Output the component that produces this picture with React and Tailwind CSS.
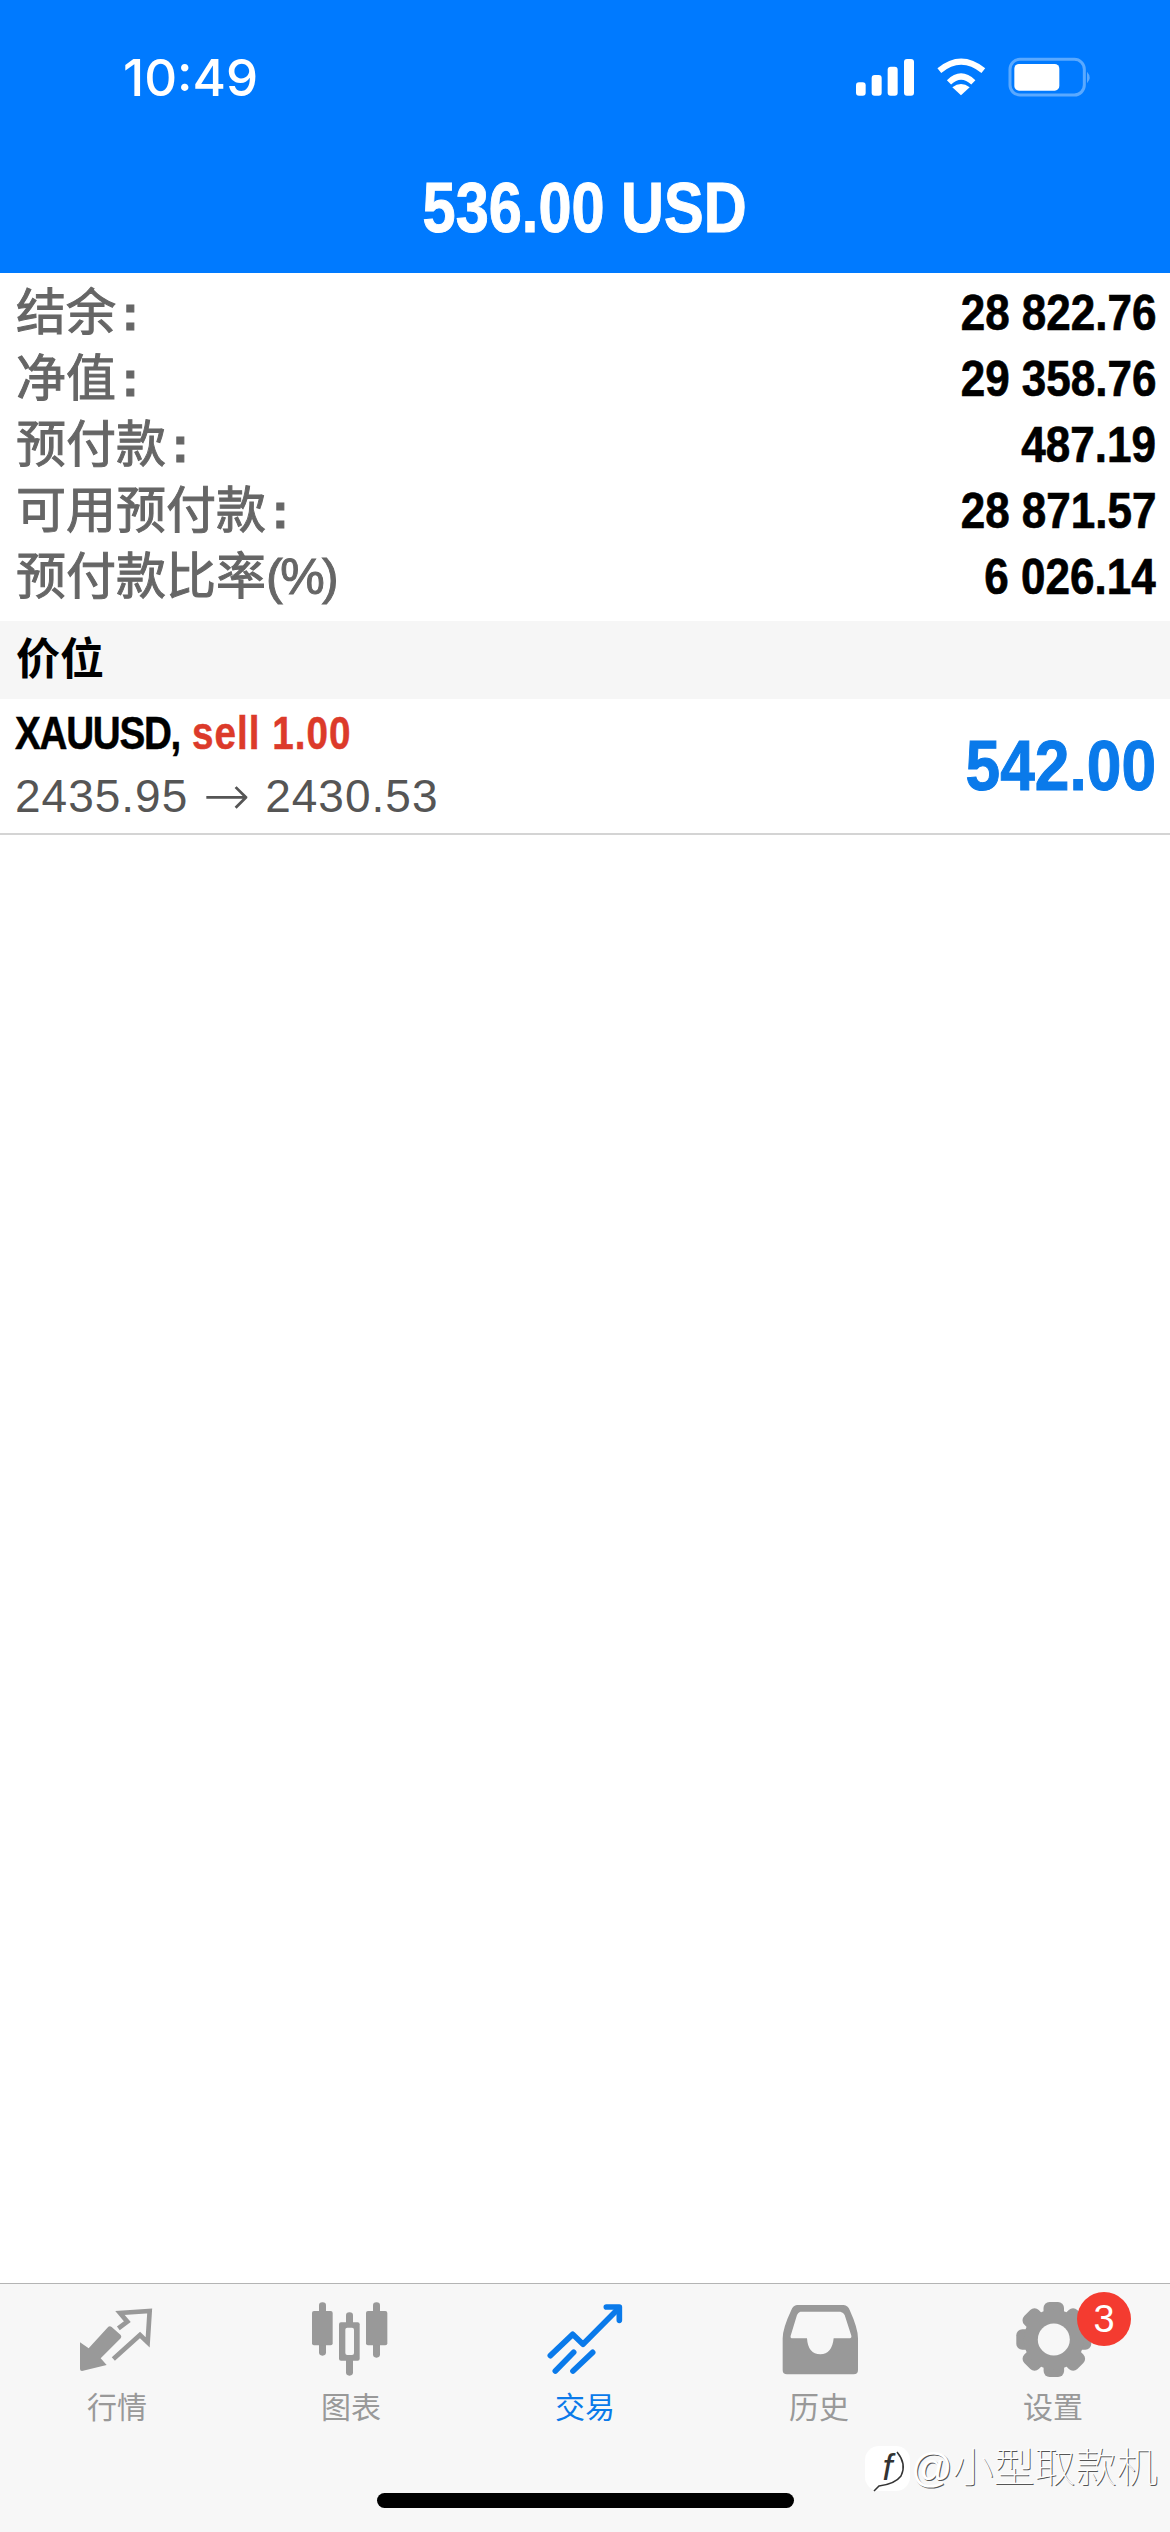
import React from "react";

const SANS = "font-['Liberation_Sans','Noto_Sans_CJK_SC',sans-serif]";

const rows = [
  ["结余", ":", "28 822.76"],
  ["净值", ":", "29 358.76"],
  ["预付款", ":", "487.19"],
  ["可用预付款", ":", "28 871.57"],
  ["预付款比率", "(%)", "6 026.14"],
];

function StatusIcons() {
  return (
    <svg width="260" height="55" viewBox="0 0 780 165">
      <g fill="#fff">
        <rect x="33" y="97" width="29" height="40" rx="9" />
        <rect x="80" y="75" width="30" height="62" rx="9" />
        <rect x="128" y="50" width="30" height="87" rx="9" />
        <rect x="177" y="27" width="30" height="110" rx="9" />
        <path d="M348 136 L322 112 Q348 92 374 112 Z" />
      </g>
      <g fill="none" stroke="#fff" strokeWidth="18" strokeLinecap="butt">
        <path d="M283 62 Q348 8 415 62" />
        <path d="M312 97 Q348 62 385 97" />
      </g>
      <rect x="495" y="28" width="223" height="107" rx="30" fill="none" stroke="#5aa9ff" strokeWidth="9" />
      <rect x="508" y="42" width="135" height="80" rx="14" fill="#fff" />
      <path d="M726 65 Q742 82 726 100 Z" fill="#5aa9ff" />
    </svg>
  );
}

function QuotesIcon() {
  return (
    <svg width="95" height="85" viewBox="0 0 285 255">
      <path d="M30 142 L56 160 L115 95 Q120 92 125 96 L152 120 Q156 125 152 130 L92 190 L110 210 L36 228 Q30 228 30 222 Z" fill="#999" />
      <polyline points="130,192 210,120 233,142 239,48 150,54 172,80 145,100" fill="none" stroke="#999" strokeWidth="14" />
    </svg>
  );
}

function ChartIcon() {
  return (
    <svg width="95" height="85" viewBox="0 0 285 255" fill="#999">
      <rect x="45" y="22" width="21" height="160" rx="10" />
      <rect x="24" y="48" width="62" height="103" rx="6" />
      <rect x="126" y="52" width="21" height="190" rx="10" />
      <rect x="105" y="82" width="62" height="115" rx="6" />
      <rect x="124" y="98" width="26" height="82" rx="6" fill="#f7f7f7" />
      <rect x="207" y="22" width="21" height="166" rx="10" />
      <rect x="186" y="48" width="64" height="103" rx="6" />
    </svg>
  );
}

function TradeIcon() {
  return (
    <svg width="95" height="85" viewBox="8 0 285 255" fill="none" stroke="#0a7aea" strokeWidth="17" strokeLinecap="round" strokeLinejoin="round">
      <polyline points="45,182 112,118 143,148 245,45" />
      <polyline points="213,36 252,36 252,76" />
      <line x1="60" y1="228" x2="115" y2="172" />
      <line x1="113" y1="228" x2="172" y2="172" />
    </svg>
  );
}

function HistoryIcon() {
  return (
    <svg width="95" height="85" viewBox="0 0 285 255">
      <path
        fillRule="evenodd"
        fill="#999"
        d="M75 30 H215 Q228 32 233 45 Q258 100 258 130 V225 Q258 238 245 238 H45 Q32 238 32 225 V130 Q32 100 58 45 Q63 32 75 30 Z M85 50 Q78 52 75 60 L56 122 Q54 130 62 130 H105 Q108 178 145 178 Q180 178 185 130 H230 Q240 130 238 122 L218 60 Q215 52 205 50 Z"
      />
    </svg>
  );
}

function GearIcon() {
  const teeth = [0, 45, 90, 135, 180, 225, 270, 315];
  return (
    <svg width="95" height="85" viewBox="0 0 95 85">
      <g fill="#999">
        {teeth.map((a) => (
          <rect key={a} x="37.5" y="7" width="20.5" height="20" rx="6" transform={`rotate(${a} 47.8 44.5)`} />
        ))}
        <circle cx="47.8" cy="44.5" r="30" />
      </g>
      <circle cx="47.8" cy="44.5" r="16" fill="#f7f7f7" />
    </svg>
  );
}

function Tab({ icon, label, active, children }) {
  return (
    <div className="relative flex flex-col items-center pt-[11px]">
      {icon}
      <span className={`mt-[8px] text-[30px] leading-[40px] ${active ? "text-[#0a7aea]" : "text-[#999999]"}`}>{label}</span>
      {children}
    </div>
  );
}

export default function App() {
  return (
    <div className={`relative flex h-[2532px] w-full flex-col overflow-hidden bg-white ${SANS}`}>
      <header className="flex h-[273px] flex-col bg-[#007aff] text-white">
        <div className="flex h-[106px] items-end justify-between pb-[1px] pr-[65px] pl-[123px]">
          <span className="mb-[-3px] font-['Inter',sans-serif] text-[51px] leading-[60px] font-medium">10:49</span>
          <StatusIcons />
        </div>
        <div className="flex flex-1 items-start justify-center pt-[37px]">
          <span className="inline-block scale-x-[0.85] text-[70px] leading-[130px] font-bold [-webkit-text-stroke:1px_#fff]">536.00 USD</span>
        </div>
      </header>

      <section className="flex flex-col pt-[7px] pb-[11px]">
        {rows.map(([label, suffix, value]) => (
          <div key={label} className="flex h-[66px] items-center justify-between pr-[14px] pl-[16px]">
            <span className="text-[50px] leading-[66px] text-[#666666] [-webkit-text-stroke:1px_#666666]">
              {label}
              <span className={suffix === ":" ? "ml-[6px] font-bold" : "tracking-[-2.5px]"}>{suffix}</span>
            </span>
            <span className="inline-block origin-right scale-x-[0.88] text-[50px] leading-[66px] font-bold text-black [-webkit-text-stroke:0.7px_#000]">{value}</span>
          </div>
        ))}
      </section>

      <div className="flex h-[78px] items-center bg-[#f6f6f6] pl-[16px] text-[44px] font-bold text-black">价位</div>

      <div className="flex h-[136px] items-center justify-between border-b-2 border-[#d4d4d4] pr-[14px] pl-[15px]">
        <div className="flex flex-col">
          <span className="-mt-[3px] inline-block origin-left scale-x-[0.84] text-[46px] leading-[60px] font-bold whitespace-nowrap text-black [-webkit-text-stroke:0.5px_#000]">
            <span className="tracking-[-1.5px]">XAUUSD, </span>
            <span className="ml-[3px] tracking-[1.2px] text-[#dc3a2a] [-webkit-text-stroke:0.5px_#dc3a2a]">sell 1.00</span>
          </span>
          <span className="mt-[3px] flex items-center text-[46px] leading-[60px] tracking-[1px] whitespace-nowrap text-[#555555]">
            2435.95
            <span className="mx-[15px] font-['DejaVu_Sans',sans-serif] text-[56px] leading-[60px] font-extralight tracking-[0px]">→</span>
            2430.53
          </span>
        </div>
        <span className="inline-block origin-right scale-x-[0.89] text-[70px] leading-[80px] font-bold text-[#0a7aea] [-webkit-text-stroke:1px_#0a7aea]">542.00</span>
      </div>

      <div className="flex-1" />

      <nav className="grid h-[249px] grid-cols-5 border-t border-[#b4b4b4] bg-[#f7f7f7]">
        <Tab icon={<QuotesIcon />} label="行情" />
        <Tab icon={<ChartIcon />} label="图表" />
        <Tab icon={<TradeIcon />} label="交易" active />
        <Tab icon={<HistoryIcon />} label="历史" />
        <Tab icon={<GearIcon />} label="设置">
          <span className="absolute top-[8px] left-[195px] flex h-[54px] w-[54px] -translate-x-full items-center justify-center rounded-full bg-[#f43b30] text-[38px] leading-none text-white">3</span>
        </Tab>
      </nav>

      <div className="absolute bottom-[24px] left-[377px] h-[15px] w-[417px] rounded-full bg-black" />

      <div className="absolute top-[2445px] left-[865px] flex items-center">
        <div className="relative flex h-[45px] w-[45px] items-center justify-center rounded-[14px] bg-white">
          <svg width="45" height="47" viewBox="0 0 45 47" fill="none" stroke="#333" strokeWidth="1.5" className="absolute top-0 left-0">
            <path d="M32 6 Q42 18 36 30 Q30 38 14 40 L9 45" />
          </svg>
          <span className="font-['Liberation_Sans',sans-serif] text-[36px] leading-none font-thin text-[#333] italic">f</span>
        </div>
        <span className="ml-[1px] text-[41px] leading-[46px] font-thin whitespace-nowrap text-white [text-shadow:1px_1px_0_#555]">@小型取款机</span>
      </div>
    </div>
  );
}
